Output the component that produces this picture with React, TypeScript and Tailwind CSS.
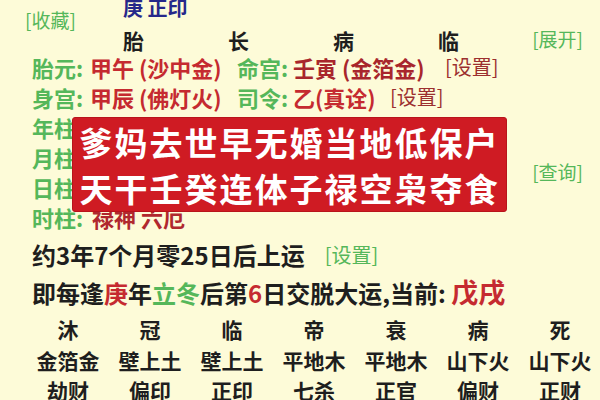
import React from 'react'

const green = 'text-[#55b75a]'
const red = 'text-[#c52a30]'

const pillars = [
  { label: '年柱:', value: '庚午 伤官 劫财' },
  { label: '月柱:', value: '丙戌 正财 比肩' },
  { label: '日柱:', value: '壬寅 食神 偏财' },
]

const cycle = [
  { stage: '沐', nayin: '金箔金', god: '劫财' },
  { stage: '冠', nayin: '壁上土', god: '偏印' },
  { stage: '临', nayin: '壁上土', god: '正印' },
  { stage: '帝', nayin: '平地木', god: '七杀' },
  { stage: '衰', nayin: '平地木', god: '正官' },
  { stage: '病', nayin: '山下火', god: '偏财' },
  { stage: '死', nayin: '山下火', god: '正财' },
]

export default function App() {
  return (
    <div className="flex w-[600px] h-[400px] overflow-hidden bg-[#fdfbd8] font-['Noto_Sans_CJK_SC',sans-serif] font-bold text-[#1e1e1e]">
      <div className="relative flex-1 flex flex-col">
        {/* Header */}
        <div className="flex h-[55px]">
          <div className="w-[123px] pl-[25px] pt-[9px]">
            <span className={`${green} text-[19px] leading-[22px] font-normal whitespace-nowrap`}>[收藏]</span>
          </div>
          <div className="flex-1 flex flex-col">
            <div className="text-[20px] leading-[16px] text-[#26288a]">庚 正印</div>
            <div className="flex mt-[12px] text-[21px] leading-[24px]">
              <span className="w-[105px]">胎</span>
              <span className="w-[105px]">长</span>
              <span className="w-[105px]">病</span>
              <span>临</span>
            </div>
          </div>
          <div className="pt-[28px] pr-[18px]">
            <span className={`${green} text-[19px] leading-[22px] font-normal whitespace-nowrap`}>[展开]</span>
          </div>
        </div>

        {/* Pillar info */}
        <div className="pl-[32px] text-[22px] leading-[30px] whitespace-nowrap">
          <div className="flex">
            <span className={`${green} w-[58px]`}>胎元:</span>
            <span className={`${red} w-[147px]`}>甲午 (沙中金)</span>
            <span className={`${green} w-[56px]`}>命宫:</span>
            <span className="text-[#a8262c] w-[152px]">壬寅 (金箔金)</span>
            <span className="text-[#9c2f2f] text-[20px] font-normal">[设置]</span>
          </div>
          <div className="flex">
            <span className={`${green} w-[58px]`}>身宫:</span>
            <span className={`${red} w-[147px]`}>甲辰 (佛灯火)</span>
            <span className={`${green} w-[56px]`}>司令:</span>
            <span className={`${red} w-[97px]`}>乙(真诠)</span>
            <span className="text-[#9c2f2f] text-[20px] font-normal">[设置]</span>
          </div>
          <div className="flex items-center">
            <div className="flex-1">
              {pillars.map((p) => (
                <div key={p.label} className="flex">
                  <span className={`${green} w-[58px]`}>{p.label}</span>
                  <span className={red}>{p.value}</span>
                </div>
              ))}
              <div className="flex">
                <span className={`${green} w-[60px]`}>时柱:</span>
                <span className="text-[#b0282e]">禄神 六厄</span>
              </div>
            </div>
            <span className={`${green} text-[19px] leading-[22px] font-normal pr-[18px]`}>[查询]</span>
          </div>
        </div>

        {/* Luck cycle text */}
        <div className="mt-[4px] pl-[32px] text-[24px] leading-[37px] whitespace-nowrap">
          <div className="flex items-center">
            <span>约3年7个月零25日后上运</span>
            <span className={`${green} text-[20px] font-normal ml-[20px]`}>[设置]</span>
          </div>
          <div>
            即每逢<span className={red}>庚</span>年<span className={green}>立冬</span>后第<span className={red}>6</span>日交脱大运,当前:{' '}
            <span className={`${red} text-[27px]`}>戊戌</span>
          </div>
        </div>

        {/* Stage grid */}
        <div className="mt-[2px] ml-[27px] grid grid-cols-[repeat(7,82px)] text-center">
          {cycle.map((c) => (
            <div key={c.nayin + c.stage} className="flex flex-col">
              <span className="text-[21px] leading-[32px]">{c.stage}</span>
              <span className="text-[21px] leading-[30px]">{c.nayin}</span>
              <span className="text-[21px] leading-[30px]">{c.god}</span>
            </div>
          ))}
        </div>

        {/* Caption overlay */}
        <div className="absolute left-[72px] top-[117px] w-[435px] h-[95px] rounded-[3px] bg-[#cf1b23] border border-[#b8141b] flex flex-col items-center justify-center text-white text-[33px] leading-[46px] tracking-[2px] whitespace-nowrap">
          <div>爹妈去世早无婚当地低保户</div>
          <div>天干壬癸连体子禄空枭夺食</div>
        </div>
      </div>
      <div className="w-[7px] border-l-2 border-[#5a5a55] bg-[#c4c4b8]" />
    </div>
  )
}
